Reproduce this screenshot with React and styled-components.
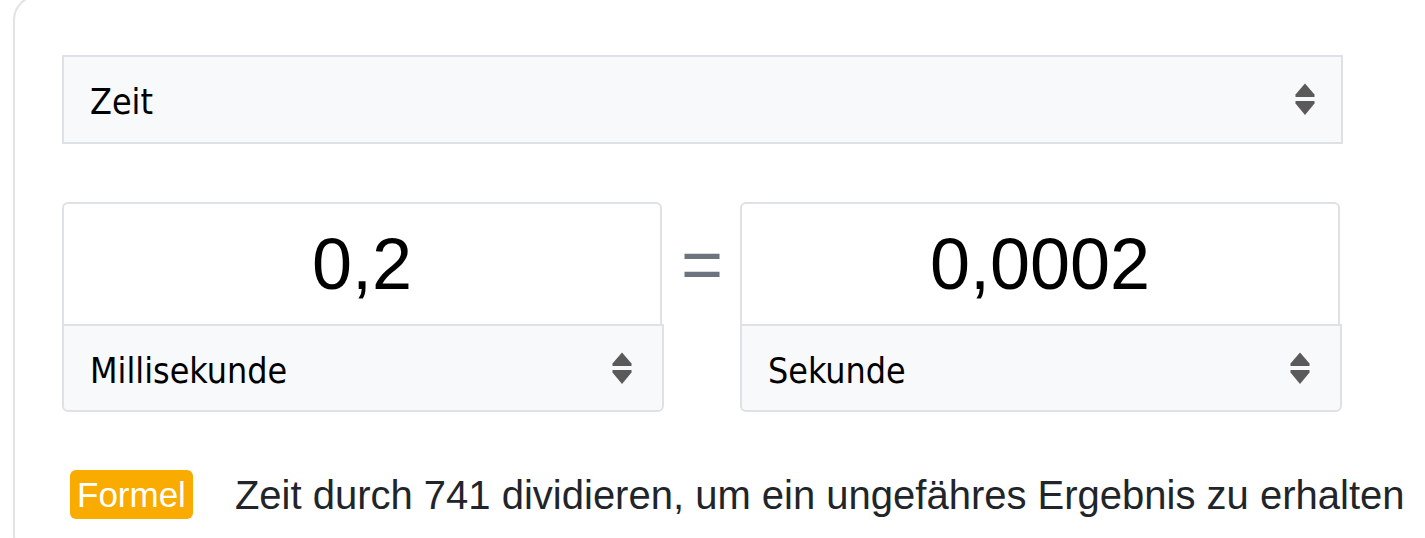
import React from "react";
import styled, { createGlobalStyle } from "styled-components";

const GlobalStyle = createGlobalStyle`
  html, body {
    margin: 0;
    padding: 0;
    background: #ffffff;
    overflow: hidden;
  }
  body {
    font-family: "Liberation Sans", Arial, sans-serif;
    color: #212529;
  }
`;

const Page = styled.div`
  padding-left: 13px;
  margin-top: -5px;
  overflow: hidden;
`;

const Card = styled.section`
  width: 1440px;
  box-sizing: border-box;
  border: 2px solid #e2e3e7;
  border-radius: 25px;
  padding: 58px 0 40px 47px;
  background: #ffffff;
  overflow: hidden;
`;

const Content = styled.div`
  width: 1281px;
  display: flex;
  flex-direction: column;
`;

const SelectBox = styled.div`
  box-sizing: border-box;
  width: ${(props) => props.$width || "100%"};
  height: ${(props) => props.$height || "88px"};
  display: flex;
  align-items: center;
  justify-content: space-between;
  padding: 0 ${(props) => props.$arrowGap || "30px"} 0 26px;
  background: #f8f9fa;
  border: 2px solid #dee2e6;
  border-radius: ${(props) => props.$radius || "0"};
  font-family: "DejaVu Sans Condensed", "DejaVu Sans", sans-serif;
  font-size: 35.5px;
  color: #000000;
  cursor: pointer;
  user-select: none;

  span {
    padding-top: 4px;
  }
`;

const SortIcon = () => (
  <svg width="20" height="33" viewBox="0 0 20 33" aria-hidden="true">
    <path d="M10 0.5 L19.5 11.5 L19.5 14 L0.5 14 L0.5 11.5 Z" fill="#5a5a5a" />
    <path d="M0.5 18 L19.5 18 L19.5 20.5 L10 32 L0.5 20.5 Z" fill="#5a5a5a" />
  </svg>
);

const Select = ({ label, ...rest }) => (
  <SelectBox {...rest}>
    <span>{label}</span>
    <SortIcon />
  </SelectBox>
);

const ConvertRow = styled.div`
  display: flex;
  align-items: flex-start;
  margin-top: 58px;
`;

const Group = styled.div`
  width: 602px;
  display: flex;
  flex-direction: column;
`;

const ValueInput = styled.input`
  box-sizing: border-box;
  width: 600px;
  height: 122px;
  margin: 0;
  padding: 0 12px;
  border: 2px solid #dee2e6;
  border-bottom: 0;
  border-radius: 6px 6px 0 0;
  background: #ffffff;
  font-family: "Liberation Sans", Arial, sans-serif;
  font-size: 72px;
  color: #000000;
  text-align: center;
  outline: none;
`;

const Equals = styled.div`
  width: 76px;
  height: 122px;
  display: flex;
  align-items: center;
  justify-content: center;
  font-family: "Liberation Sans", Arial, sans-serif;
  font-size: 72px;
  color: #6c757d;
  padding-top: 2px;
  box-sizing: border-box;
`;

const FormulaRow = styled.div`
  display: flex;
  align-items: center;
  margin-top: 58px;
  padding-left: 8px;
  white-space: nowrap;
`;

const Badge = styled.span`
  display: inline-block;
  padding: 4px 7px;
  border-radius: 6px;
  background: #f9ab00;
  color: #ffffff;
  font-size: 35px;
  line-height: 41px;
`;

const FormulaText = styled.p`
  margin: 0 0 0 42px;
  font-size: 40px;
  line-height: 46px;
  color: #212529;
`;

const UnitSide = ({ value, unit }) => (
  <Group>
    <ValueInput type="text" value={value} readOnly />
    <Select label={unit} $width="602px" $height="88px" $radius="0 0 6px 6px" />
  </Group>
);

export default function App() {
  return (
    <>
      <GlobalStyle />
      <Page>
        <Card>
          <Content>
            <Select label="Zeit" $height="89px" $arrowGap="26px" />
            <ConvertRow>
              <UnitSide value="0,2" unit="Millisekunde" />
              <Equals>=</Equals>
              <UnitSide value="0,0002" unit="Sekunde" />
            </ConvertRow>
            <FormulaRow>
              <Badge>Formel</Badge>
              <FormulaText>
                Zeit durch 741 dividieren, um ein ungefähres Ergebnis zu erhalten
              </FormulaText>
            </FormulaRow>
          </Content>
        </Card>
      </Page>
    </>
  );
}
